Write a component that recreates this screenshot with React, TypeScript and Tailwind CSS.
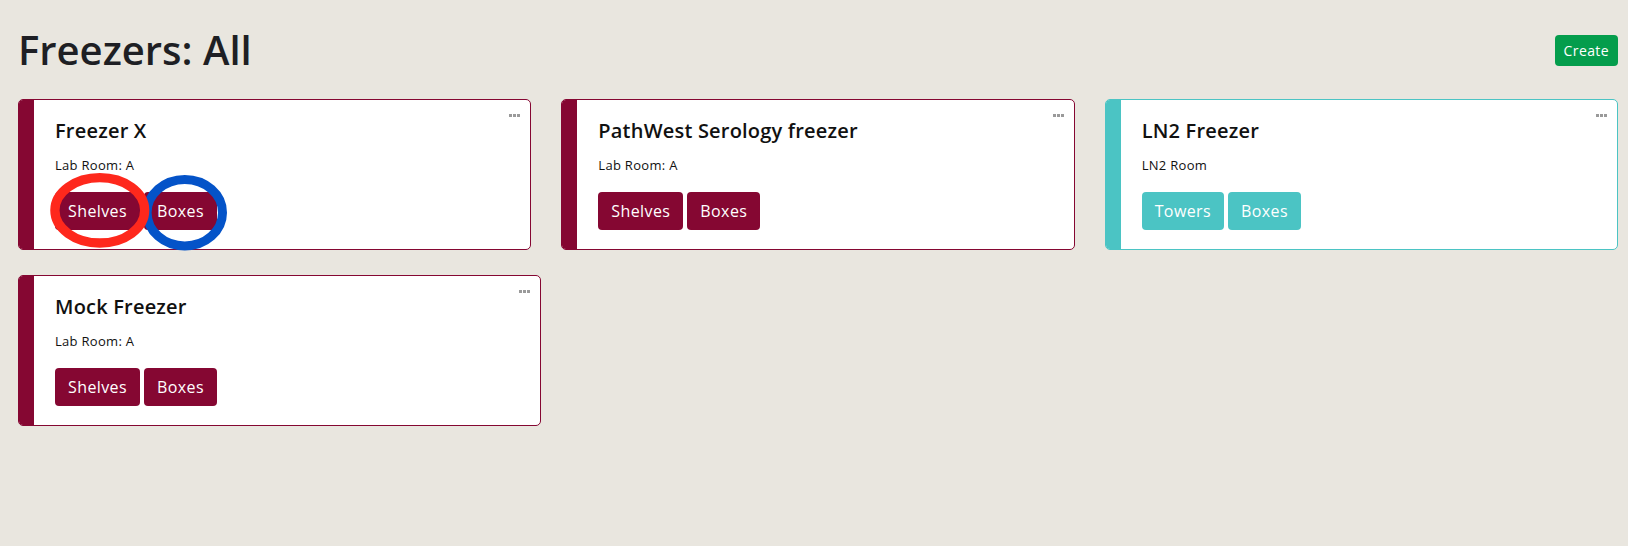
const font = { fontFamily: '"Open Sans", "Liberation Sans", sans-serif' };

type Freezer = {
  name: string;
  room: string;
  color: "maroon" | "teal";
  actions: string[];
  wide?: boolean;
  marked?: boolean;
};

const freezers: Freezer[] = [
  { name: "Freezer X", room: "Lab Room: A", color: "maroon", actions: ["Shelves", "Boxes"], marked: true },
  { name: "PathWest Serology freezer", room: "Lab Room: A", color: "maroon", actions: ["Shelves", "Boxes"] },
  { name: "LN2 Freezer", room: "LN2 Room", color: "teal", actions: ["Towers", "Boxes"] },
  { name: "Mock Freezer", room: "Lab Room: A", color: "maroon", actions: ["Shelves", "Boxes"], wide: true },
];

const Dots = () => (
  <div className="absolute top-[14px] right-[10px] flex gap-[1px]">
    <span className="w-[3px] h-[3px] bg-[#9a9a9a]" />
    <span className="w-[3px] h-[3px] bg-[#9a9a9a]" />
    <span className="w-[3px] h-[3px] bg-[#9a9a9a]" />
  </div>
);

// hand-drawn highlight rings that sit over the first card
const Marks = () => (
  <svg className="absolute left-0 top-0 pointer-events-none" width="260" height="152" viewBox="0 0 260 152">
    <ellipse cx="165.8" cy="112.7" rx="37.7" ry="33.2" fill="none" stroke="#0453c8" strokeWidth="9" />
    <ellipse cx="80.8" cy="110.3" rx="44.9" ry="32.7" fill="none" stroke="#fe281c" strokeWidth="9.3" />
  </svg>
);

const FreezerCard = ({ f }: { f: Freezer }) => {
  const maroon = f.color === "maroon";
  return (
    <div
      className={`relative flex h-[151px] rounded-[5px] border bg-white ${
        maroon ? "border-[#850732]" : "border-[#4bc4c4]"
      } ${f.wide ? "w-[523px]" : "w-full"}`}
    >
      <div className={`w-[15px] shrink-0 rounded-l-[4px] ${maroon ? "bg-[#850732]" : "bg-[#4bc4c4]"}`} />
      <div className="flex flex-col pl-[21px] pt-[17px]">
        <h2 className="text-[20px] leading-[28px] font-semibold tracking-[0.2px] text-[#111]">{f.name}</h2>
        <p className="mt-[10px] text-[13px] leading-[20px] tracking-[0.3px] text-[#111]">{f.room}</p>
        <div className="mt-[17px] flex gap-[4px]">
          {f.actions.map((a) => (
            <button
              key={a}
              className={`h-[38px] rounded-[4px] px-[13px] text-[16px] tracking-[0.4px] text-white ${
                maroon ? "bg-[#850732]" : "bg-[#4bc4c4]"
              }`}
            >
              {a}
            </button>
          ))}
        </div>
      </div>
      <Dots />
      {f.marked && <Marks />}
    </div>
  );
};

export default function App() {
  return (
    <div className="min-h-[546px] bg-[#e9e6df] pl-[18px] pr-[10px] pt-[26px]" style={font}>
      <div className="flex h-[48px] items-center justify-between">
        <h1 className="text-[40px] leading-[48px] font-semibold text-[#1e1f24]">Freezers: All</h1>
        <button className="h-[31px] rounded-[4px] bg-[#049d4c] px-[9px] text-[14px] tracking-[0.4px] text-white">
          Create
        </button>
      </div>
      <div className="mt-[25px] grid grid-cols-3 gap-x-[30px] gap-y-[25px]">
        {freezers.map((f) => (
          <FreezerCard key={f.name} f={f} />
        ))}
      </div>
    </div>
  );
}
